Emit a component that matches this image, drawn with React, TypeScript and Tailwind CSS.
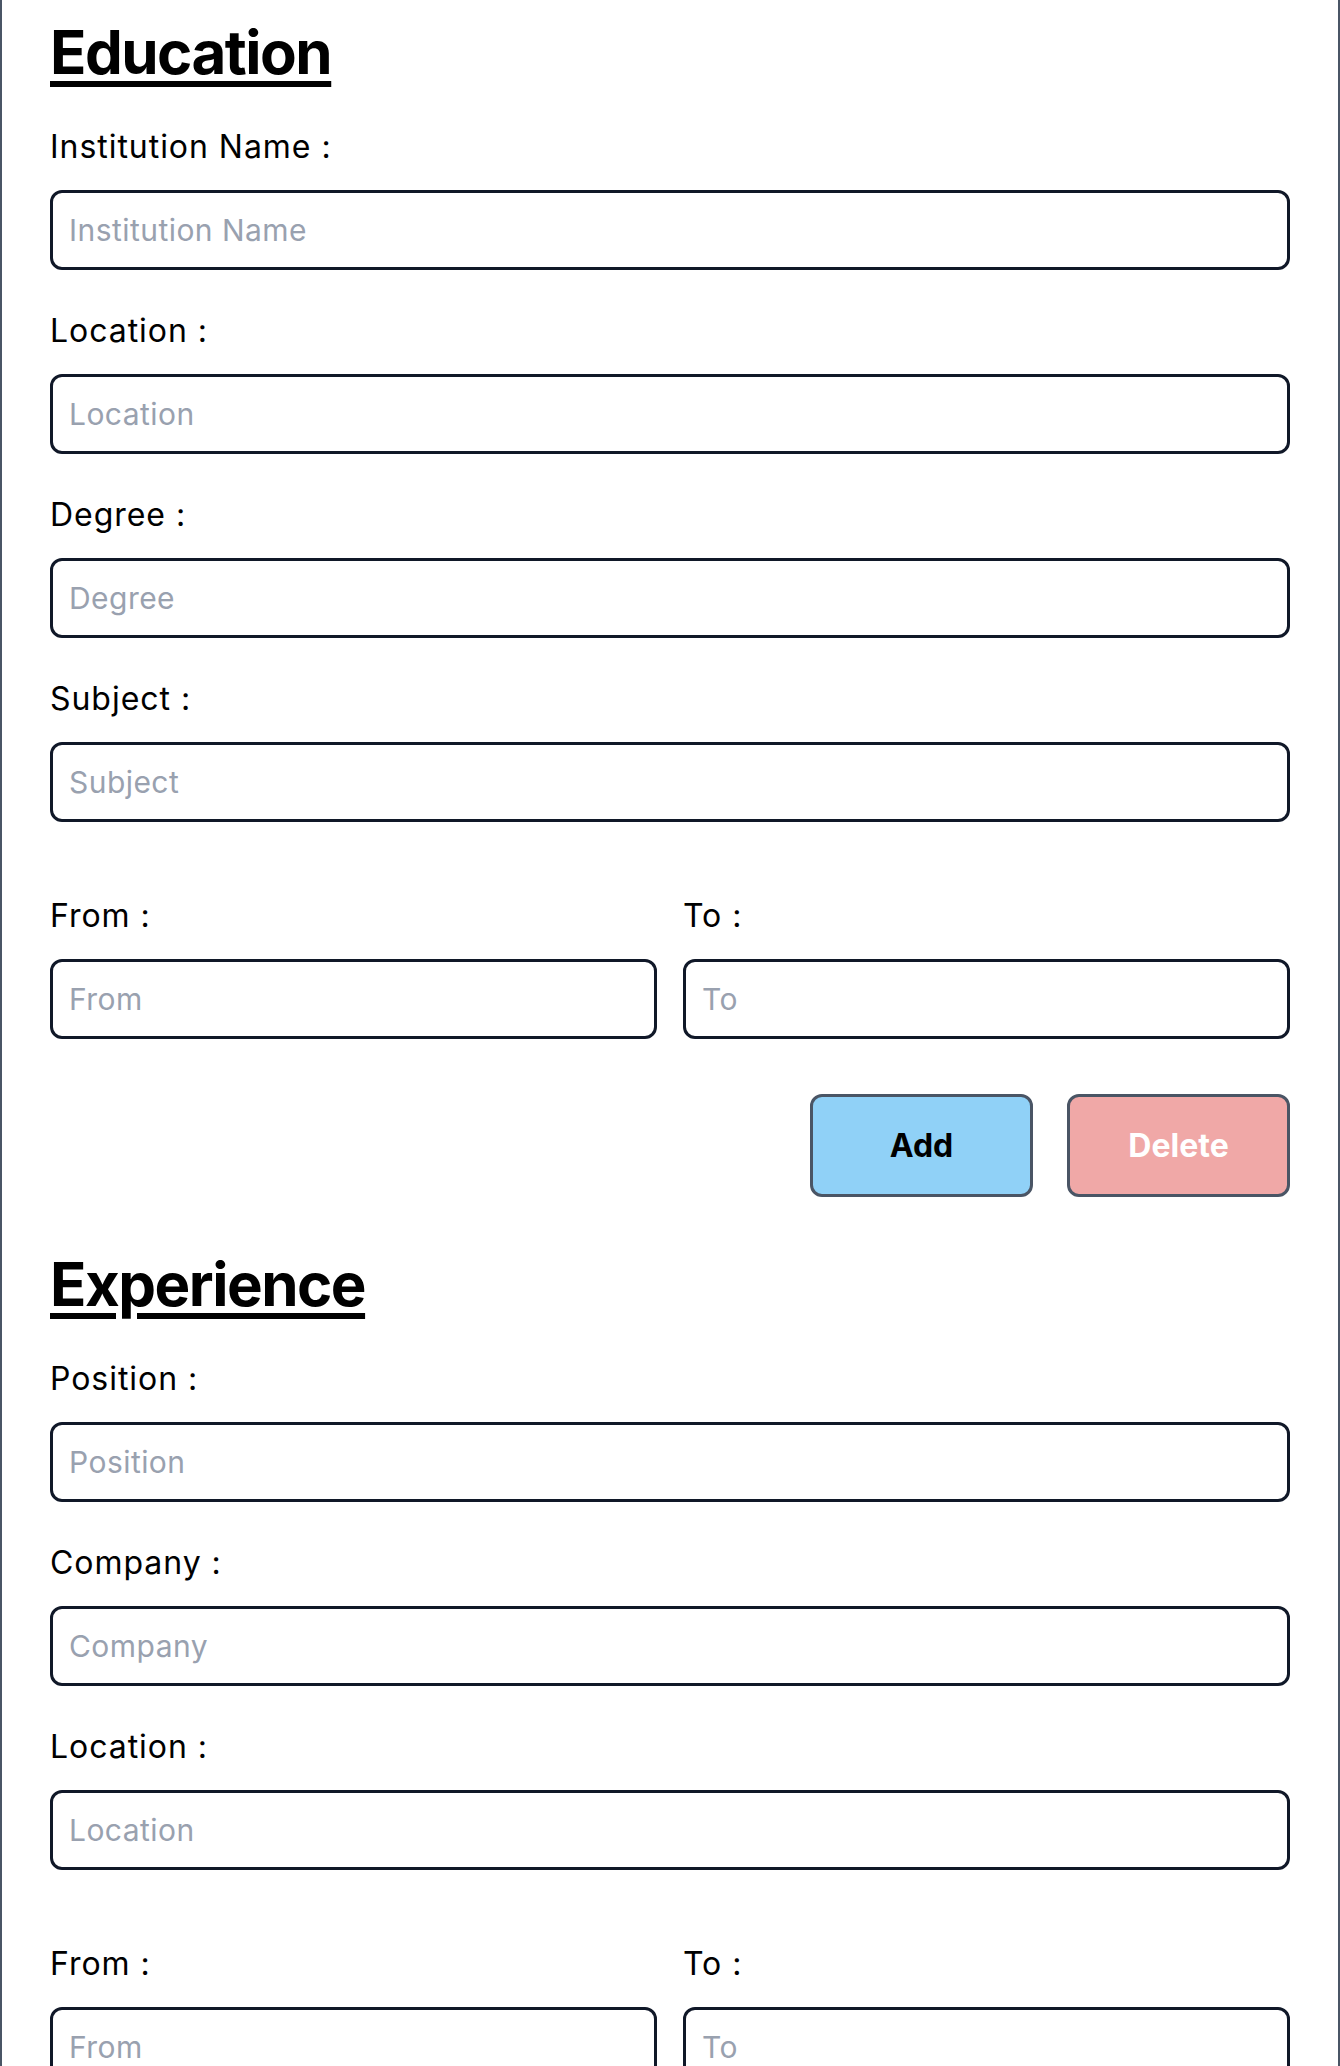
import React from 'react';

interface FieldProps {
    label: string;
    placeholder: string;
}

const Field: React.FC<FieldProps> = ({ label, placeholder }) => {
    return (
        <div className="flex flex-col">
            <label className="text-[32px] leading-9 tracking-[0.03em] text-black mb-[25px]">{label} :</label>
            <input
                type="text"
                placeholder={placeholder}
                className="h-[80px] w-full border-[3px] border-gray-900 rounded-xl px-4 text-3xl tracking-[0.015em] text-black placeholder:text-gray-400 outline-none"
            />
        </div>
    );
};

const Section: React.FC<{ title: string; fields: string[] }> = ({ title, fields }) => {
    return (
        <section className="flex flex-col">
            <h2 className="text-6xl leading-none font-bold tracking-tight text-black underline decoration-[6px] underline-offset-[7px]">
                {title}
            </h2>

            <div className="mt-[47px] flex flex-col gap-[43px]">
                {fields.map((f) => (
                    <Field key={f} label={f} placeholder={f} />
                ))}
            </div>

            <div className="mt-[76px] grid grid-cols-2 gap-[26px]">
                <Field label="From" placeholder="From" />
                <Field label="To" placeholder="To" />
            </div>

            <div className="mt-[55px] flex justify-end gap-[34px]">
                <button className="h-[103px] w-[223px] rounded-xl border-[3px] border-gray-600 bg-[#90d1f7] text-[32px] font-bold text-black">
                    Add
                </button>
                <button className="h-[103px] w-[223px] rounded-xl border-[3px] border-gray-600 bg-[#f0a8a7] text-[32px] font-bold text-white">
                    Delete
                </button>
            </div>
        </section>
    );
};

export default function App() {
    return (
        <div className="min-h-screen bg-white border-x-2 border-gray-600 px-12 pt-[22px] pb-12 font-['Inter',sans-serif]">
            <div className="flex flex-col gap-[57px]">
                <Section title="Education" fields={['Institution Name', 'Location', 'Degree', 'Subject']} />
                <Section title="Experience" fields={['Position', 'Company', 'Location']} />
            </div>
        </div>
    );
}
